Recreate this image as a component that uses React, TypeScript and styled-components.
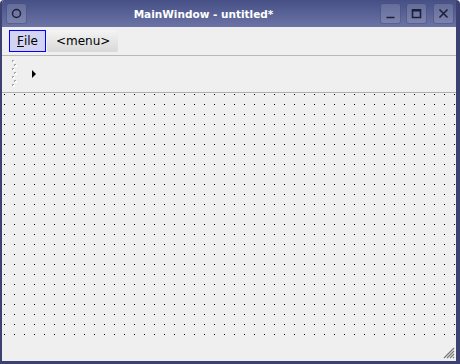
import React from 'react'
import styled, { createGlobalStyle } from 'styled-components'

const Global = createGlobalStyle`
  html, body { margin: 0; padding: 0; background: #ffffff; }
  body { font-family: "DejaVu Sans", "Liberation Sans", sans-serif; }
`

const Window = styled.div`
  width: 460px;
  height: 364px;
  box-sizing: border-box;
  display: flex;
  flex-direction: column;
  background: #efefef;
  border-left: 2px solid #3c4172;
  border-right: 4px solid #3c4172;
  border-bottom: 3px solid #3c4172;
  border-radius: 4px 4px 0 0;
  overflow: hidden;
`

const TitleBar = styled.div`
  height: 27px;
  margin: 0 -4px 0 -2px;
  padding: 0 6px;
  display: flex;
  align-items: center;
  gap: 4px;
  background: linear-gradient(#465086, #6c74a6);
  flex-shrink: 0;
`

const TitleButton = styled.div<{ $gap?: number }>`
  width: 19px;
  height: 19px;
  border-radius: 3px;
  background: rgba(255, 255, 255, 0.14);
  border: 1px solid rgba(30, 34, 80, 0.35);
  display: flex;
  align-items: center;
  justify-content: center;
  margin-left: ${({ $gap }) => $gap ?? 0}px;
`

const Title = styled.div`
  flex: 1;
  text-align: center;
  color: #ffffff;
  font-family: "DejaVu Sans", sans-serif;
  font-weight: bold;
  font-size: 10.5px;
`

const MenuBar = styled.div`
  height: 28px;
  display: flex;
  align-items: center;
  padding: 0 0 0 7px;
  gap: 1px;
  border-bottom: 1px solid #b8b8b8;
  background: #efefef;
  flex-shrink: 0;
`

const MenuItem = styled.div<{ $active?: boolean }>`
  height: 22px;
  box-sizing: border-box;
  display: flex;
  align-items: center;
  font-size: 12px;
  color: #000;
  padding: ${({ $active }) => ($active ? '0 7px' : '0 8px 0 9px')};
  border: ${({ $active }) => ($active ? '1px solid #0000ff' : 'none')};
  background: ${({ $active }) =>
    $active ? '#d3d3f4' : 'linear-gradient(#f4f4f4, #d8d8d8)'};
  border-radius: ${({ $active }) => ($active ? '0' : '2px')};
`

const Mnemonic = styled.span`
  text-decoration: underline;
`

const ToolBar = styled.div`
  height: 36px;
  display: flex;
  align-items: center;
  padding-left: 9px;
  gap: 14px;
  border-bottom: 1px solid #b0b0b0;
  flex-shrink: 0;
`

const Handle = () => (
  <svg width="7" height="28" viewBox="0 0 7 28">
    {Array.from({ length: 7 }).map((_, i) => (
      <g key={i}>
        <rect x={i % 2 ? 3 : 1} y={i * 4} width="2" height="2" fill="#a8a8a8" />
        <rect x={i % 2 ? 4 : 2} y={i * 4 + 1} width="2" height="2" fill="#ffffff" />
      </g>
    ))}
  </svg>
)

const Arrow = styled.div`
  width: 0;
  height: 0;
  border-top: 4px solid transparent;
  border-bottom: 4px solid transparent;
  border-left: 4px solid #000;
`

const Canvas = styled.div`
  flex: 1;
  background-color: #efefef;
  overflow: hidden;
`

const Dots = styled.svg`
  display: block;
  width: 100%;
  height: 100%;
`

const StatusBar = styled.div`
  height: 22px;
  display: flex;
  justify-content: flex-end;
  align-items: flex-end;
  padding: 0 1px 2px 0;
  flex-shrink: 0;
`

const Grip = () => (
  <svg width="12" height="12" viewBox="0 0 12 12">
    <path d="M11 1 L1 11 M11 4 L4 11 M11 7 L7 11 M11 10 L10 11" stroke="#7a7a7a" strokeWidth="1.2" />
  </svg>
)

const Icon: React.FC<{ d: string; circle?: boolean }> = ({ d, circle }) => (
  <svg width="11" height="11" viewBox="0 0 11 11">
    {circle ? (
      <circle cx="5.5" cy="5.5" r="4" fill="none" stroke="#1c1f38" strokeWidth="1.5" />
    ) : (
      <path d={d} fill="none" stroke="#1c1f38" strokeWidth="1.6" />
    )}
  </svg>
)

const App: React.FC = () => (
  <>
    <Global />
    <Window>
      <TitleBar>
        <TitleButton>
          <Icon d="" circle />
        </TitleButton>
        <Title>MainWindow - untitled*</Title>
        <TitleButton>
          <Icon d="M1.5 9.5 H9.5" />
        </TitleButton>
        <TitleButton $gap={1}>
          <Icon d="M1.5 1.8 H9.5 V9.5 H1.5 Z M1.5 2.6 H9.5" />
        </TitleButton>
        <TitleButton $gap={2}>
          <Icon d="M1.5 1.5 L9.5 9.5 M9.5 1.5 L1.5 9.5" />
        </TitleButton>
      </TitleBar>
      <MenuBar>
        <MenuItem $active>
          <Mnemonic>F</Mnemonic>ile
        </MenuItem>
        <MenuItem>&lt;menu&gt;</MenuItem>
      </MenuBar>
      <ToolBar>
        <Handle />
        <Arrow />
      </ToolBar>
      <Canvas>
        <Dots>
          <defs>
            <pattern id="grid" x="0" y="0" width="10" height="10" patternUnits="userSpaceOnUse">
              <rect x="2" y="1" width="1" height="1" fill="#000" />
            </pattern>
          </defs>
          <rect width="100%" height="100%" fill="url(#grid)" />
        </Dots>
      </Canvas>
      <StatusBar>
        <Grip />
      </StatusBar>
    </Window>
  </>
)

export default App
